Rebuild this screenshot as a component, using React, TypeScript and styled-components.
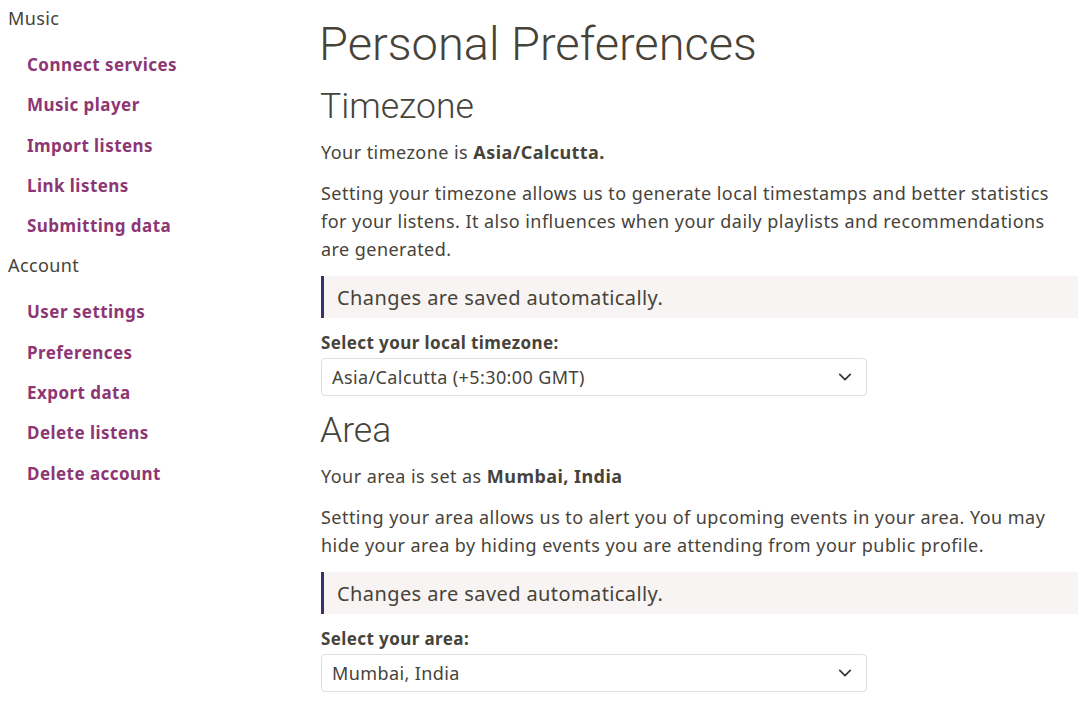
import styled, { createGlobalStyle } from "styled-components";

const GlobalStyle = createGlobalStyle`
  body {
    margin: 0;
    background: #ffffff;
    color: #46433a;
    font-family: "Noto Sans", "Open Sans", sans-serif;
  }
`;

const Page = styled.div`
  display: grid;
  grid-template-columns: 321px 757px;
  width: 1088px;
  height: 713px;
  overflow: hidden;
`;

const Sidebar = styled.nav`
  display: flex;
  flex-direction: column;
  padding: 5px 0 0 8px;
`;

const SectionTitle = styled.div`
  font-size: 18px;
  line-height: 26px;
  letter-spacing: 0.4px;
  color: #46433a;
  margin-bottom: 14px;
`;

const NavList = styled.ul`
  list-style: none;
  margin: 0 0 6px 0;
  padding: 0 0 0 19px;
  display: flex;
  flex-direction: column;
`;

const NavLink = styled.a`
  display: block;
  font-size: 17px;
  font-weight: 700;
  line-height: 40.3px;
  color: #8d3674;
  text-decoration: none;
  letter-spacing: 0.45px;
`;

const Main = styled.main`
  display: flex;
  flex-direction: column;
`;

const Title = styled.h1`
  font-family: Roboto, sans-serif;
  font-weight: 300;
  font-size: 47px;
  line-height: 56px;
  margin: 16px 0 0 -2px;
  color: #46433a;
`;

const Heading = styled.h2<{ $top: number }>`
  font-family: Roboto, sans-serif;
  font-weight: 300;
  font-size: 35.5px;
  line-height: 44px;
  margin: ${(p) => p.$top}px 0 0 -1px;
  color: #46433a;
`;

const Text = styled.p<{ $top: number }>`
  font-size: 18px;
  line-height: 28px;
  letter-spacing: 0.45px;
  margin: ${(p) => p.$top}px 0 0 0;
  color: #46433a;
`;

const Callout = styled.div`
  margin-top: 13px;
  height: 42px;
  display: flex;
  align-items: center;
  padding-left: 13px;
  border-left: 3px solid #353070;
  background: #f8f4f3;
  font-size: 20px;
  letter-spacing: 0.4px;
  color: #46433a;
`;

const Label = styled.label`
  display: block;
  margin-top: 14px;
  font-size: 17px;
  font-weight: 700;
  line-height: 22px;
  letter-spacing: 0.4px;
  color: #46433a;
`;

const SelectBox = styled.div`
  margin-top: 4px;
  width: 546px;
  height: 38px;
  box-sizing: border-box;
  border: 1px solid #dedde3;
  border-radius: 4px;
  display: flex;
  align-items: center;
  justify-content: space-between;
  padding: 0 14px 0 10px;
  font-size: 18px;
  letter-spacing: 0.4px;
  color: #46433a;
`;

const Chevron = () => (
  <svg width="14" height="14" viewBox="0 0 16 16" fill="none">
    <path d="M2 5l6 6 6-6" stroke="#343a40" strokeWidth="2" strokeLinecap="round" strokeLinejoin="round" />
  </svg>
);

const musicLinks = ["Connect services", "Music player", "Import listens", "Link listens", "Submitting data"];
const accountLinks = ["User settings", "Preferences", "Export data", "Delete listens", "Delete account"];

export default function App() {
  return (
    <>
      <GlobalStyle />
      <Page>
        <Sidebar>
          <SectionTitle>Music</SectionTitle>
          <NavList>
            {musicLinks.map((l) => (
              <li key={l}>
                <NavLink href="#">{l}</NavLink>
              </li>
            ))}
          </NavList>
          <SectionTitle>Account</SectionTitle>
          <NavList>
            {accountLinks.map((l) => (
              <li key={l}>
                <NavLink href="#">{l}</NavLink>
              </li>
            ))}
          </NavList>
        </Sidebar>
        <Main>
          <Title>Personal Preferences</Title>
          <Heading $top={12}>Timezone</Heading>
          <Text $top={10}>
            Your timezone is <b>Asia/Calcutta.</b>
          </Text>
          <Text $top={13}>
            Setting your timezone allows us to generate local timestamps and better statistics for your
            listens. It also influences when your daily playlists and recommendations are generated.
          </Text>
          <Callout>Changes are saved automatically.</Callout>
          <Label>Select your local timezone:</Label>
          <SelectBox>
            <span>Asia/Calcutta (+5:30:00 GMT)</span>
            <Chevron />
          </SelectBox>
          <Heading $top={12}>Area</Heading>
          <Text $top={10}>
            Your area is set as <b>Mumbai, India</b>
          </Text>
          <Text $top={13}>
            Setting your area allows us to alert you of upcoming events in your area. You may hide your
            area by hiding events you are attending from your public profile.
          </Text>
          <Callout>Changes are saved automatically.</Callout>
          <Label>Select your area:</Label>
          <SelectBox>
            <span>Mumbai, India</span>
            <Chevron />
          </SelectBox>
        </Main>
      </Page>
    </>
  );
}
